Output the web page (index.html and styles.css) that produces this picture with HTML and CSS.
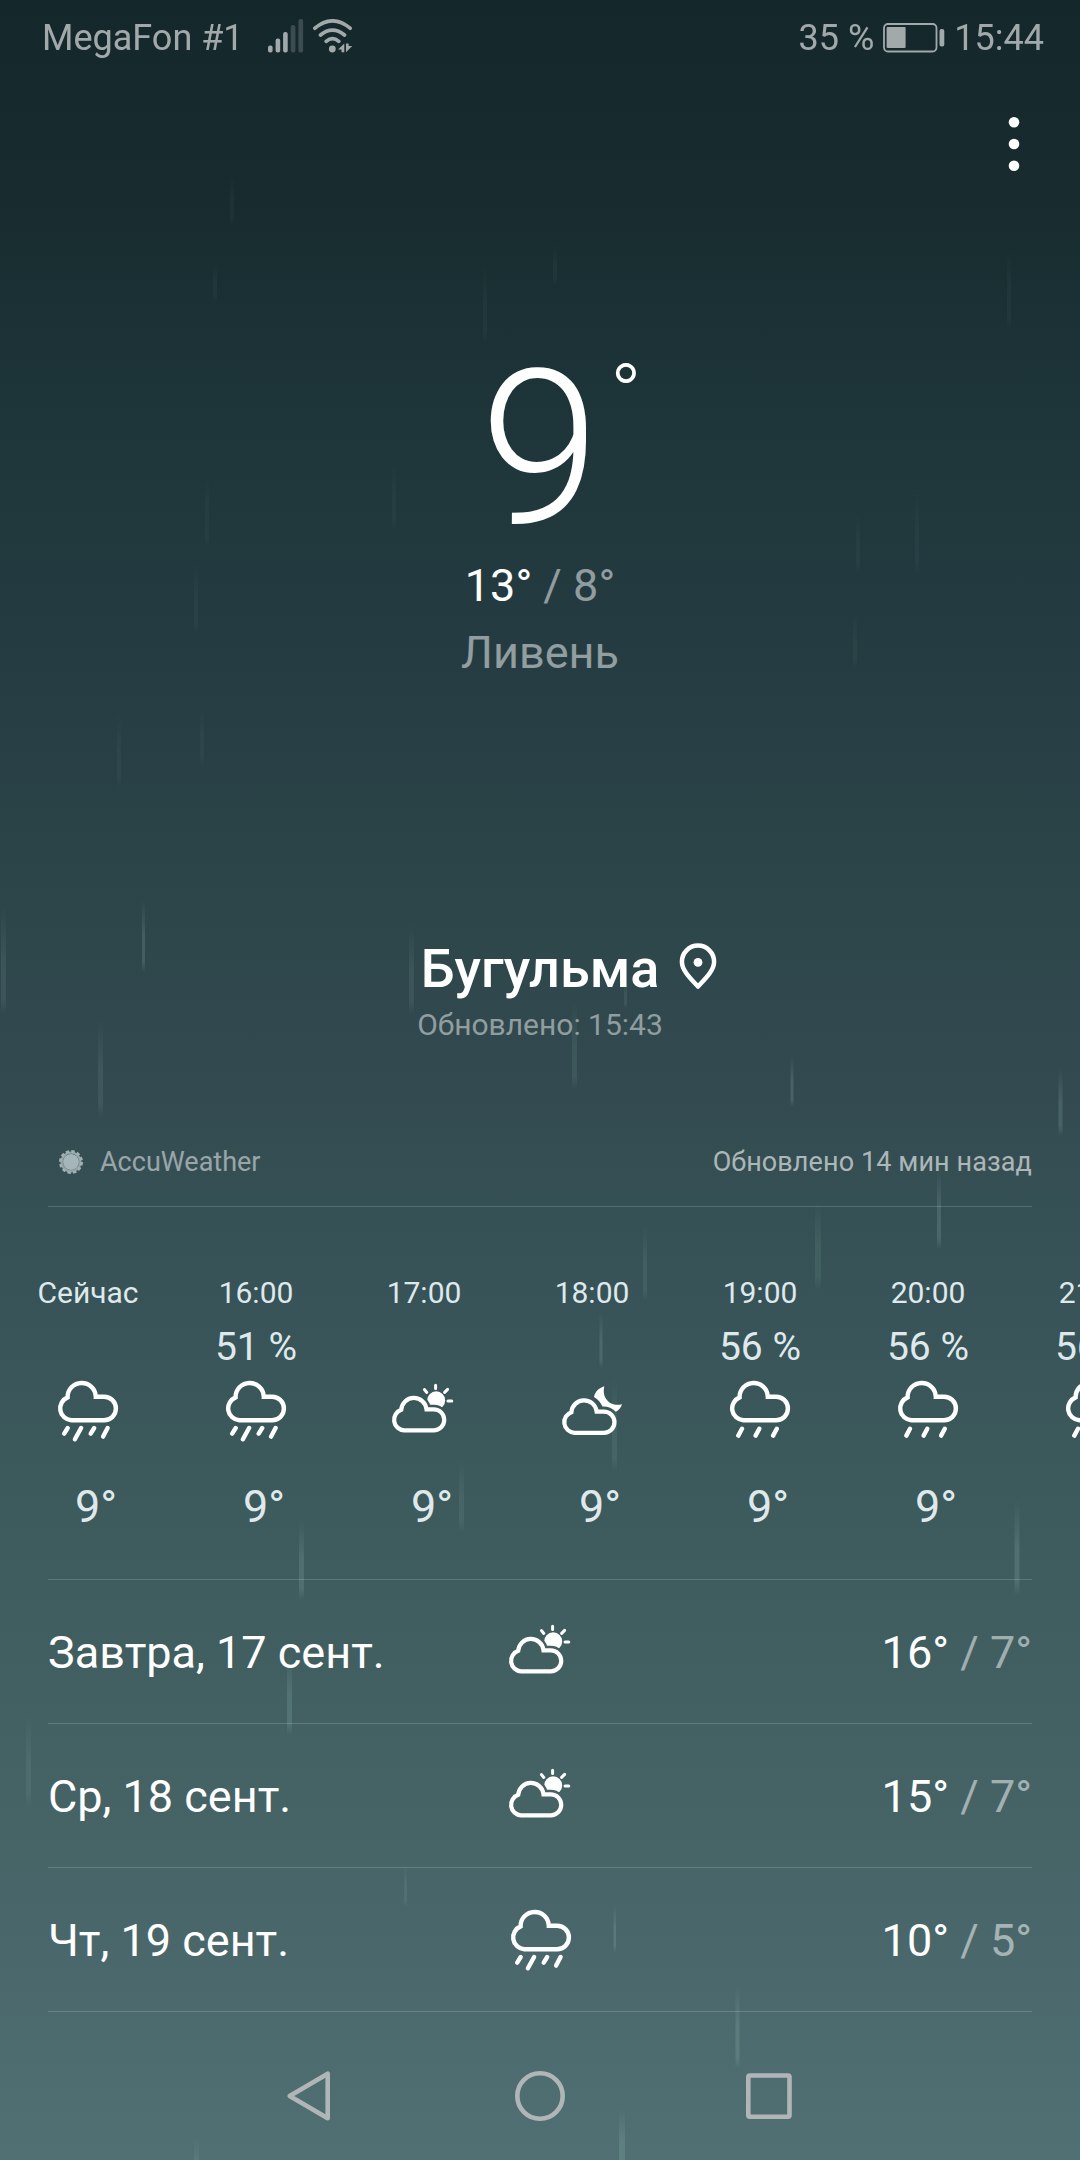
FILE: index.html
```
<!DOCTYPE html>
<html lang="ru">
<head>
<meta charset="utf-8">
<title>Погода</title>
<link rel="stylesheet" href="styles.css">
</head>
<body>
<svg class="defs" width="0" height="0" aria-hidden="true">
  <defs>
    <linearGradient id="streak" x1="0" y1="0" x2="0" y2="1">
      <stop offset="0" stop-color="#a8cfc8" stop-opacity="0"/>
      <stop offset=".5" stop-color="#a8cfc8" stop-opacity=".8"/>
      <stop offset=".85" stop-color="#a8cfc8" stop-opacity=".8"/>
      <stop offset="1" stop-color="#a8cfc8" stop-opacity="0"/>
    </linearGradient>
    <path id="cloud" d="M15.6 22.4A14.1 14.1 0 0 1 43.8 21.7H52.1A11.8 11.8 0 0 1 52.1 45.3H19.3A11.9 11.9 0 0 1 15.6 22.4Z"/>
    <path id="cloud-small" d="M13.2 34.8A12.7 12.7 0 0 1 38.5 34.3H45.7A10.55 10.55 0 0 1 45.7 55.4H16.2A10.6 10.6 0 0 1 13.2 34.8Z"/>
    <mask id="behind-cloud" maskUnits="userSpaceOnUse" x="0" y="0" width="72" height="72">
      <rect width="72" height="72" fill="#fff"/>
      <use href="#cloud-small" fill="#000" stroke="#000" stroke-width="9"/>
    </mask>
    <symbol id="rain-heavy" viewBox="0 0 72 72">
      <g fill="none" stroke="#fff" stroke-width="4.4" stroke-linecap="round">
        <use href="#cloud"/>
        <path d="M15.7 53L12.2 58.6M29.1 53L22.9 64.3M42.2 53L38.7 58.6M55.6 53L51.1 61.6"/>
      </g>
    </symbol>
    <symbol id="rain-light" viewBox="0 0 72 72">
      <g fill="none" stroke="#fff" stroke-width="4.4" stroke-linecap="round">
        <use href="#cloud"/>
        <path d="M18 53.7L14.3 60.6M35.3 53.7L31.6 60.6M52.8 53.7L49.1 60.6"/>
      </g>
    </symbol>
    <symbol id="partly-sunny" viewBox="0 0 72 72">
      <use href="#cloud-small" fill="none" stroke="#fff" stroke-width="4.2"/>
      <circle cx="48.2" cy="25.3" r="9" fill="#fff" mask="url(#behind-cloud)"/>
      <path d="M47.6 10.2V13.4M36.4 14.6L38.8 17.4M59.6 14.4L56.6 17.4M60 26.1H63.8" fill="none" stroke="#fff" stroke-width="3" stroke-linecap="round"/>
    </symbol>
    <symbol id="partly-moon" viewBox="0 0 72 72">
      <use href="#cloud-small" x="2.2" y="2.4" fill="none" stroke="#fff" stroke-width="4.2"/>
      <path d="M48.3 11.3C43 13 38.8 17 38 22C42.3 24.3 44.8 27.6 46.4 31.4C51.6 31.2 56.4 33 59.8 36.8C62.6 35.4 65.2 32.4 66 29.2C55 32.2 45.4 24 48.3 11.3Z" fill="#fff"/>
    </symbol>
  </defs>
</svg>

<svg class="rain" viewBox="0 0 1080 2160" aria-hidden="true">
  <g fill="url(#streak)" opacity=".05">
    <rect x="230" y="175" width="4" height="50"/><rect x="213" y="262" width="4" height="40"/>
    <rect x="553" y="245" width="4" height="40"/><rect x="483" y="262" width="4" height="82"/>
    <rect x="1007" y="250" width="4" height="80"/><rect x="205" y="475" width="4" height="72"/>
    <rect x="392" y="460" width="4" height="70"/><rect x="856" y="512" width="4" height="60"/>
    <rect x="915" y="485" width="4" height="90"/><rect x="194" y="560" width="4" height="75"/>
    <rect x="853" y="612" width="4" height="56"/><rect x="117" y="712" width="4" height="76"/>
    <rect x="200" y="708" width="4" height="58"/>
  </g>
  <g fill="url(#streak)" opacity=".12">
    <rect x="1" y="905" width="5" height="110"/><rect x="409" y="925" width="5" height="90"/>
    <rect x="98" y="1020" width="5" height="98"/><rect x="572" y="1000" width="5" height="90"/>
    <rect x="624" y="980" width="3" height="28"/><rect x="815" y="1200" width="6" height="90"/>
    <rect x="643" y="1225" width="4" height="76"/><rect x="612" y="1378" width="5" height="95"/>
    <rect x="459" y="1460" width="5" height="72"/><rect x="26" y="1715" width="5" height="92"/>
    <rect x="404" y="1863" width="3" height="44"/><rect x="194" y="2138" width="5" height="40"/>
  </g>
  <g fill="url(#streak)" opacity=".21">
    <rect x="142" y="900" width="3" height="72"/><rect x="790.500" y="1055" width="3" height="52"/>
    <rect x="1058.500" y="1068" width="4" height="68"/><rect x="937" y="1168" width="4" height="82"/>
    <rect x="599.500" y="1312" width="3" height="56"/><rect x="1014.500" y="1500" width="5" height="95"/>
    <rect x="299" y="1520" width="5" height="80"/><rect x="287" y="1652" width="5" height="84"/>
    <rect x="613.500" y="1903" width="2.500" height="50"/><rect x="735.500" y="1985" width="4" height="84"/>
    <rect x="619" y="2108" width="6" height="70"/>
  </g>
</svg>

<div class="screen">
  <header class="status">
    <span class="carrier">MegaFon #1</span>
    <svg class="signal" width="36" height="34" viewBox="0 0 36 34">
      <g fill="#fff">
        <rect x="0" y="26.500" width="4.600" height="7" rx="2"/><rect x="7.600" y="19.500" width="4.600" height="14" rx="2"/><rect x="15.100" y="13" width="4.600" height="20.500" rx="2"/>
        <g opacity=".28"><rect x="22.700" y="6" width="4.700" height="27.500" rx="2"/><rect x="30.400" y="0" width="4.700" height="33.500" rx="2"/></g>
      </g>
    </svg>
    <svg class="wifi" width="40" height="34" viewBox="0 0 40 34">
      <g fill="none" stroke="#fff" stroke-width="3.700" stroke-linecap="round">
        <path d="M1.900 9.200Q19.500-5.400 37.100 9.200M7.500 16Q19.500 6.200 31.500 16M13.200 22.400Q19.500 17 25.800 22.400"/>
      </g>
      <circle cx="19.300" cy="30" r="3.400" fill="#fff"/>
      <path d="M25 30.500L31.300 24.500V33.300H28.500V30.500ZM33 24.500H35.600V27H39.200L33 33.300Z" fill="#fff"/>
    </svg>
    <span class="charge">35 %</span>
    <svg class="battery" width="62" height="30" viewBox="0 0 62 30">
      <rect x="1" y="1" width="52.500" height="27.500" rx="4" fill="none" stroke="#fff" stroke-width="1.800"/>
      <rect x="3.600" y="4" width="19" height="21" rx="1" fill="#fff"/>
      <rect x="56.500" y="6" width="4.800" height="17.500" rx="2" fill="#fff"/>
    </svg>
    <span class="clock">15:44</span>
  </header>

  <div class="toolbar">
    <svg width="12" height="56" viewBox="0 0 12 56" fill="#fff"><circle cx="6" cy="6.300" r="5.300"/><circle cx="6" cy="28" r="5.300"/><circle cx="6" cy="49.700" r="5.300"/></svg>
  </div>

  <section class="current">
    <div class="temperature">9<span class="degree">°</span></div>
    <div class="range">13° <span class="low">/ 8°</span></div>
    <div class="condition">Ливень</div>
  </section>

  <section class="place">
    <div class="city">
      <h1 class="city-name">Бугульма</h1>
      <svg class="pin" width="38" height="48" viewBox="0 0 38 48">
        <path d="M19 43.500C12 36 2.900 27.500 2.900 18.700A16.100 16.100 0 0 1 35.100 18.700C35.100 27.500 26 36 19 43.500Z" fill="none" stroke="#fff" stroke-width="4.500" stroke-linejoin="round"/>
        <circle cx="19" cy="19.300" r="4.400" fill="#fff"/>
      </svg>
    </div>
    <div class="refreshed">Обновлено: 15:43</div>
  </section>

  <div class="source">
    <svg class="accu" width="26" height="26" viewBox="-13 -13 26 26">
      <circle r="9.400" fill="none" stroke="#91a3a6" stroke-width="2.400"/>
      <circle r="10.600" fill="none" stroke="#a0b0b3" stroke-width="2.800" stroke-dasharray="3.400 2.150"/>
      <circle r="8" fill="#a5b5b8"/>
    </svg>
    <span class="provider">AccuWeather</span>
    <span class="age">Обновлено 14 мин назад</span>
  </div>

  <section class="hourly">
    <div class="hour"><span class="time">Сейчас</span><span class="chance"></span><svg class="icon"><use href="#rain-heavy"/></svg><span class="value">9°</span></div>
    <div class="hour"><span class="time">16:00</span><span class="chance">51 %</span><svg class="icon"><use href="#rain-heavy"/></svg><span class="value">9°</span></div>
    <div class="hour"><span class="time">17:00</span><span class="chance"></span><svg class="icon"><use href="#partly-sunny"/></svg><span class="value">9°</span></div>
    <div class="hour"><span class="time">18:00</span><span class="chance"></span><svg class="icon"><use href="#partly-moon"/></svg><span class="value">9°</span></div>
    <div class="hour"><span class="time">19:00</span><span class="chance">56 %</span><svg class="icon"><use href="#rain-light"/></svg><span class="value">9°</span></div>
    <div class="hour"><span class="time">20:00</span><span class="chance">56 %</span><svg class="icon"><use href="#rain-light"/></svg><span class="value">9°</span></div>
    <div class="hour"><span class="time">21:00</span><span class="chance">56 %</span><svg class="icon"><use href="#rain-light"/></svg><span class="value">9°</span></div>
  </section>

  <section class="daily">
    <div class="day"><span>Завтра, 17 сент.</span><svg class="icon"><use href="#partly-sunny"/></svg><span class="span">16° <span class="low">/ 7°</span></span></div>
    <div class="day"><span>Ср, 18 сент.</span><svg class="icon"><use href="#partly-sunny"/></svg><span class="span">15° <span class="low">/ 7°</span></span></div>
    <div class="day"><span>Чт, 19 сент.</span><svg class="icon"><use href="#rain-heavy"/></svg><span class="span">10° <span class="low">/ 5°</span></span></div>
  </section>

  <nav class="nav">
    <svg width="52" height="52" viewBox="0 0 52 52"><path d="M42.700 3.700V48.300L4.700 26Z"/></svg>
    <svg width="52" height="52" viewBox="0 0 52 52"><circle cx="26" cy="26" r="22.700"/></svg>
    <svg width="52" height="52" viewBox="0 0 52 52"><rect x="5.300" y="5.500" width="41.200" height="41.200" rx="1.500"/></svg>
  </nav>
</div>
</body>
</html>
```

FILE: styles.css
```
* { box-sizing: border-box; }

body {
  margin: 0;
  width: 1080px;
  height: 2160px;
  overflow: hidden;
  position: relative;
  font-family: Roboto, "Noto Sans", sans-serif;
  color: #fff;
  background: linear-gradient(180deg, #14272b 0, #182c2f 200px, #1d3438 400px, #243c41 640px, #2c4549 880px, #334b50 1100px, #365256 1250px, #3d5a5d 1520px, #466366 1830px, #4d6c6f 2060px, #507073 2160px);
}

.defs { position: absolute; }
.rain { position: absolute; left: 0; top: 0; width: 1080px; height: 2160px; }

.screen {
  position: relative;
  display: flex;
  flex-direction: column;
  height: 2160px;
}

.low { color: rgba(255, 255, 255, .5); }
.icon { display: block; width: 72px; height: 72px; }

/* system status bar */
.status {
  display: flex;
  align-items: center;
  height: 75px;
  padding: 2px 36px 0 42px;
  font-size: 36px;
  line-height: 73px;
  opacity: .6;
}
.signal { margin-left: 24px; margin-top: -5px; }
.wifi { margin-left: 9px; margin-top: -5px; }
.charge { margin-left: auto; }
.battery { margin: -2px 9px 0 9px; }

.toolbar {
  display: flex;
  justify-content: flex-end;
  align-items: center;
  height: 138px;
  padding-right: 60px;
}

/* current conditions */
.current { margin-top: 128px; text-align: center; }
.temperature {
  position: relative;
  width: max-content;
  height: 215px;
  margin: 0 auto;
  font-size: 216px;
  font-weight: 300;
  line-height: 217px;
}
.degree {
  position: absolute;
  left: calc(100% + 10px);
  top: 12px;
  font-size: 84px;
  line-height: 84px;
}
.range { font-size: 45px; line-height: 60px; }
.condition { font-size: 45px; line-height: 73px; color: rgba(255, 255, 255, .5); }

/* city */
.place { margin-top: 248px; text-align: center; }
.city {
  display: grid;
  grid-template-columns: 1fr auto 1fr;
  align-items: center;
  height: 64px;
}
.city-name {
  grid-column: 2;
  margin: 0;
  font-size: 54px;
  font-weight: 500;
  line-height: 64px;
}
.pin { margin: -5px 0 0 20px; }
.refreshed { font-size: 30px; line-height: 48px; color: rgba(255, 255, 255, .47); }

/* provider line */
.source {
  display: flex;
  align-items: center;
  height: 90px;
  margin: 68px 48px 0;
  border-bottom: 1px solid rgba(255, 255, 255, .17);
  font-size: 27px;
}
.accu { margin-left: 10px; }
.provider { margin-left: 16px; color: rgba(255, 255, 255, .5); }
.age { margin-left: auto; letter-spacing: .1px; color: rgba(255, 255, 255, .6); }

/* hourly strip */
.hourly {
  display: flex;
  height: 372px;
  margin-left: 4px;
  padding-top: 64px;
  overflow: hidden;
  color: #dfe9ec;
}
.hour {
  flex: 0 0 168px;
  display: flex;
  flex-direction: column;
  align-items: center;
}
.time { font-size: 30px; line-height: 44px; }
.chance { height: 60px; font-size: 39px; line-height: 64px; }
.value { margin-top: 33px; padding-left: 16px; font-size: 45px; line-height: 54px; }

/* daily list */
.daily { margin: 0 48px; border-top: 1px solid rgba(255, 255, 255, .17); }
.day {
  display: grid;
  grid-template-columns: 1fr 72px 1fr;
  align-items: center;
  height: 144px;
  border-bottom: 1px solid rgba(255, 255, 255, .17);
  font-size: 45px;
  line-height: 56px;
}
.day > span { padding-top: 3px; }
.day > .icon { margin-left: 1px; }
.span { text-align: right; }

/* navigation bar */
.nav {
  display: flex;
  justify-content: space-between;
  margin: 58px 285px 0;
  fill: none;
  stroke: #b1b5b7;
  stroke-width: 4.6;
  stroke-linejoin: round;
}
```
